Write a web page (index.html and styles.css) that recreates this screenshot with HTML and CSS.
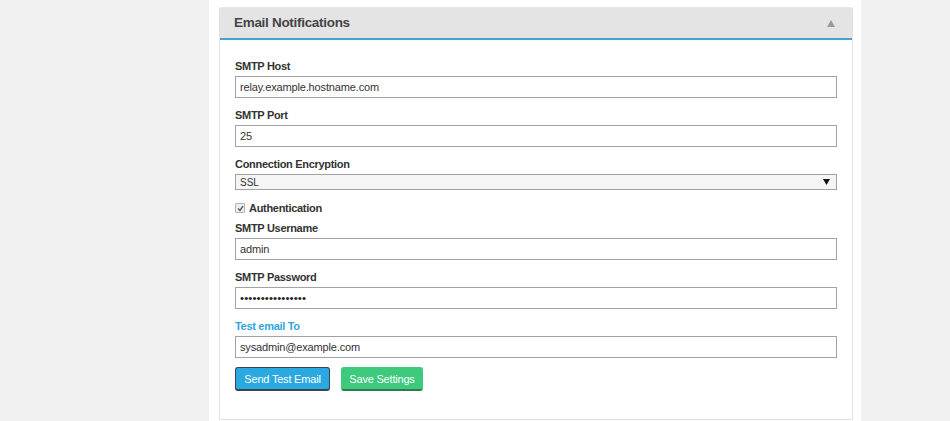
FILE: index.html
```html
<!DOCTYPE html>
<html>
<head>
<meta charset="utf-8">
<link rel="stylesheet" href="styles.css">
</head>
<body>
<div class="column">
  <div class="panel">
    <div class="panel-header">
      <span class="panel-title">Email Notifications</span>
      <svg class="caret" width="8" height="7" viewBox="0 0 8 7"><path d="M4 0 L8 7 L0 7 Z" fill="#9a9a9a"/></svg>
    </div>
    <div class="panel-body">
      <div class="field">
        <label class="lbl">SMTP Host</label>
        <input class="txt" type="text" value="relay.example.hostname.com">
      </div>
      <div class="field">
        <label class="lbl">SMTP Port</label>
        <input class="txt" type="text" value="25">
      </div>
      <div class="field">
        <label class="lbl">Connection Encryption</label>
        <div class="select">
          <span>SSL</span>
          <svg width="7" height="6" viewBox="0 0 7 6"><path d="M0 0 L7 0 L3.5 6 Z" fill="#111"/></svg>
        </div>
      </div>
      <div class="check-row">
        <span class="check"><svg width="7" height="7" viewBox="0 0 7 7"><path d="M1 3.5 L3 5.5 L6 1.2" fill="none" stroke="#555" stroke-width="1.4"/></svg></span>
        <span class="check-label">Authentication</span>
      </div>
      <div class="field">
        <label class="lbl">SMTP Username</label>
        <input class="txt" type="text" value="admin">
      </div>
      <div class="field">
        <label class="lbl">SMTP Password</label>
        <input class="txt txt-pass" type="password" value="abcdefghijklmnop">
      </div>
      <div class="field">
        <label class="lbl lbl-blue">Test email To</label>
        <input class="txt" type="text" value="sysadmin@example.com">
      </div>
      <div class="actions">
        <button class="btn btn-blue">Send Test Email</button>
        <button class="btn btn-green">Save Settings</button>
      </div>
    </div>
  </div>
</div>
</body>
</html>
```
FILE: styles.css
```css
html, body {
  margin: 0;
  padding: 0;
  background: #f1f1f1;
  font-family: "Liberation Sans", Arial, sans-serif;
  color: #333;
}
.column {
  margin-left: 209px;
  width: 652px;
  height: 421px;
  background: #fff;
  padding-top: 7px;
  box-sizing: border-box;
}
.panel {
  margin-left: 10px;
  width: 634px;
  border: 1px solid #e2e2e2;
  border-top: none;
  box-sizing: border-box;
  height: 413px;
}
.panel-header {
  height: 31px;
  background: #e4e4e4;
  border-bottom: 2px solid #44a7c9;
  display: flex;
  align-items: center;
  justify-content: space-between;
  padding: 0 17px 0 14px;
  border-radius: 3px 3px 0 0;
}
.panel-title {
  font-size: 13.5px;
  letter-spacing: -0.3px;
  font-weight: bold;
  color: #444;
}
.caret {
  margin-top: 2px;
}
.panel-body {
  padding: 18px 15px 0 15px;
}
.field {
  display: flex;
  flex-direction: column;
  margin-bottom: 9px;
}
.lbl {
  font-size: 11px;
  letter-spacing: -0.3px;
  font-weight: bold;
  line-height: 16px;
  margin-bottom: 2px;
  color: #333;
}
.lbl-blue {
  color: #2ea6dd;
}
.txt {
  height: 22px;
  box-sizing: border-box;
  border: 1px solid #a3a3a3;
  padding: 0 4px;
  font-family: "Liberation Sans", Arial, sans-serif;
  font-size: 11px;
  letter-spacing: -0.15px;
  color: #333;
  margin: 0;
  outline: none;
}
.txt-pass {
  font-size: 11.5px;
  letter-spacing: 0.1px;
  color: #222;
}
.select {
  height: 16px;
  box-sizing: border-box;
  border: 1px solid #a3a3a3;
  background: #f5f5f5;
  display: flex;
  align-items: center;
  justify-content: space-between;
  padding: 0 6px 0 4px;
  font-size: 10px;
  color: #333;
}
.check-row {
  display: flex;
  align-items: center;
  height: 18px;
  margin-bottom: 3px;
}
.check {
  width: 8px;
  height: 8px;
  border: 1px solid #b5b5b5;
  background: #ededed;
  display: flex;
  align-items: center;
  justify-content: center;
  margin-right: 4px;
  border-radius: 1px;
}
.check-label {
  font-size: 11px;
  letter-spacing: -0.3px;
  font-weight: bold;
  color: #333;
}
.actions {
  display: flex;
  gap: 11px;
  margin-top: 2px;
}
.btn {
  height: 24px;
  box-sizing: border-box;
  border-radius: 3px;
  font-family: "Liberation Sans", Arial, sans-serif;
  font-size: 11px;
  letter-spacing: -0.2px;
  color: #fff;
  padding: 0;
  margin: 0;
  white-space: nowrap;
}
.btn-blue {
  width: 95px;
  background: #2aa9e0;
  border: 1px solid #3a434d;
  border-bottom-width: 2px;
}
.btn-green {
  width: 82px;
  background: #3dca7d;
  border: 1px solid #3dca7d;
  border-bottom: 2px solid #2a7f4d;
}
```
